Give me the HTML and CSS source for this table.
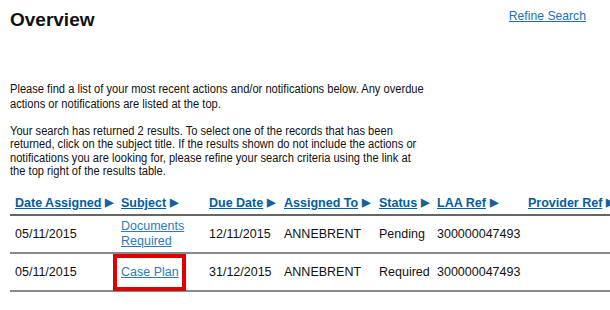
FILE: index.html
```html
<!DOCTYPE html>
<html>
<head>
<meta charset="utf-8">
<link rel="stylesheet" href="styles.css">
</head>
<body>
<div class="page">
  <div class="top">
    <h1 class="title">Overview</h1>
    <a class="refine" href="#">Refine Search</a>
  </div>
  <p class="intro first">Please find a list of your most recent actions and/or notifications below. Any overdue<br>actions or notifications are listed at the top.</p>
  <p class="intro">Your search has returned 2 results. To select one of the records that has been<br>returned, click on the subject title. If the results shown do not include the actions or<br>notifications you are looking for, please refine your search criteria using the link at<br>the top right of the results table.</p>
  <table class="results">
    <colgroup>
      <col class="c1"><col class="c2"><col class="c3"><col class="c4"><col class="c5"><col class="c6"><col class="c7">
    </colgroup>
    <thead>
      <tr>
        <th><a href="#">Date Assigned</a><span class="tri">&#9654;</span></th>
        <th><a href="#">Subject</a><span class="tri">&#9654;</span></th>
        <th><a href="#">Due Date</a><span class="tri">&#9654;</span></th>
        <th><a href="#">Assigned To</a><span class="tri">&#9654;</span></th>
        <th><a href="#">Status</a><span class="tri">&#9654;</span></th>
        <th><a href="#">LAA Ref</a><span class="tri">&#9654;</span></th>
        <th><a href="#">Provider Ref</a><span class="tri">&#9654;</span></th>
      </tr>
    </thead>
    <tbody>
      <tr>
        <td>05/11/2015</td>
        <td><a href="#">Documents Required</a></td>
        <td>12/11/2015</td>
        <td>ANNEBRENT</td>
        <td>Pending</td>
        <td>300000047493</td>
        <td></td>
      </tr>
      <tr>
        <td>05/11/2015</td>
        <td><a class="marked" href="#">Case Plan</a></td>
        <td>31/12/2015</td>
        <td>ANNEBRENT</td>
        <td>Required</td>
        <td>300000047493</td>
        <td></td>
      </tr>
    </tbody>
  </table>
</div>
</body>
</html>
```
FILE: styles.css
```css
html, body {
  margin: 0;
  padding: 0;
  overflow: hidden;
  background: #fff;
}
body {
  font-family: "Liberation Sans", Arial, sans-serif;
  color: #111;
  font-size: 12.5px;
}
.page {
  padding: 0 0 0 10px;
  width: 640px;
}
.top {
  display: flex;
  justify-content: space-between;
  align-items: flex-start;
  width: 576px;
  padding-top: 9px;
}
.title {
  margin: 0;
  font-size: 19px;
  font-weight: bold;
  line-height: 22px;
}
.refine {
  color: #1d70b8;
  font-size: 12.2px;
}
.intro {
  margin: 0;
  width: 500px;
  white-space: nowrap;
  font-size: 12.5px;
  line-height: 13.3px;
  transform: scaleX(0.89);
  transform-origin: left top;
}
.intro.first {
  margin-top: 51px;
  margin-bottom: 13px;
  line-height: 15px;
}
.results {
  margin-top: 15px;
  border-collapse: collapse;
  table-layout: fixed;
  width: 620px;
}
.c1 { width: 106px; }
.c2 { width: 88px; }
.c3 { width: 75px; }
.c4 { width: 95px; }
.c5 { width: 58px; }
.c6 { width: 91px; }
.c7 { width: 107px; }
.results th {
  text-align: left;
  font-weight: bold;
  padding: 3px 0 4px 5px;
  border-bottom: 2px solid #666;
  white-space: nowrap;
}
.results th a {
  color: #005ea5;
}
.tri {
  color: #1a5f9e;
  font-size: 11px;
  margin-left: 4px;
  vertical-align: 1px;
}
.results td {
  padding: 3px 0 3px 5px;
  border-bottom: 2px solid #888;
  line-height: 15px;
  vertical-align: middle;
  white-space: nowrap;
}
.results tbody tr:first-child td {
  height: 30px;
}
.results tbody tr:last-child td {
  height: 30px;
}
.results td a {
  color: #2b7bc0;
  white-space: normal;
}
.marked {
  position: relative;
}
.marked::after {
  content: "";
  position: absolute;
  left: -8px;
  right: -7px;
  top: -11px;
  bottom: -12px;
  border: 4px solid #e00000;
}
```
